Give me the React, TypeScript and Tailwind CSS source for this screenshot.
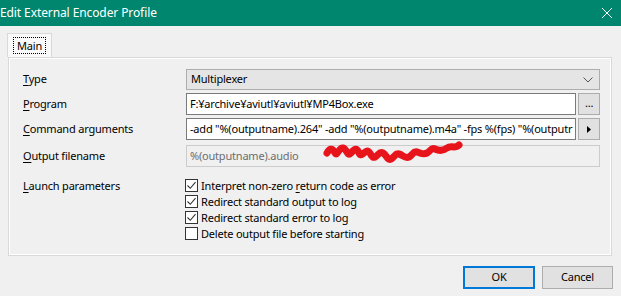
import React from "react";

const font = { fontFamily: '"Noto Sans", "Open Sans", sans-serif' };

function U({ children }: { children: React.ReactNode }) {
  return <span className="underline underline-offset-2 decoration-1">{children}</span>;
}

function Check({ checked, children }: { checked: boolean; children: React.ReactNode }) {
  return (
    <div className="flex items-center h-[16px]">
      <div className="w-[13px] h-[13px] border border-[#333] bg-white flex items-center justify-center">
        {checked && (
          <svg width="11" height="11" viewBox="0 0 11 11">
            <path d="M1.5 5.5 L4.3 8.3 L9.5 2.2" fill="none" stroke="#333" strokeWidth="1.1" />
          </svg>
        )}
      </div>
      <span className="ml-[3px] text-black leading-none">{children}</span>
    </div>
  );
}

export default function App() {
  return (
    <div className="w-[621px] h-[296px] bg-[#f0f0f0] flex flex-col overflow-hidden text-[11px] tracking-[-0.2px] text-black" style={font}>
      <div className="h-[26px] bg-[#00866f] flex items-center justify-between shrink-0">
        <span className="text-white text-[12px] tracking-[-0.1px]">Edit External Encoder Profile</span>
        <svg width="12" height="12" viewBox="0 0 12 12" className="mr-[8px]">
          <path d="M1 1 L11 11 M11 1 L1 11" stroke="#fff" strokeWidth="1" />
        </svg>
      </div>
      <div className="pl-[7px] pt-[7px] flex">
        <div className="h-[24px] w-[45px] border border-b-0 border-[#d9d9d9] bg-[#f9f9f9] flex items-center justify-center">
          <div className="border border-dotted border-black px-[3px] h-[17px] flex items-center leading-none">Main</div>
        </div>
      </div>
      <div className="ml-[8px] w-[604px] h-[199px] border border-[#d9d9d9] bg-[#f0f0f0] shadow-[inset_1px_1px_0_#fff,inset_-1px_-1px_0_#fff] pt-[11px] pl-[14px] pr-[11px] flex flex-col">
        <div className="flex items-center h-[21px]">
          <div className="w-[163px] shrink-0"><U>T</U>ype</div>
          <div className="flex-1 h-[21px] bg-[#e5e5e5] border border-[#adadad] flex items-center justify-between pl-[4px] pr-[6px]">
            <span>Multiplexer</span>
            <svg width="10" height="6" viewBox="0 0 10 6">
              <path d="M0.5 0.5 L5 5 L9.5 0.5" fill="none" stroke="#555" strokeWidth="1" />
            </svg>
          </div>
        </div>
        <div className="flex items-center h-[22px] mt-[3px]">
          <div className="w-[163px] shrink-0"><U>P</U>rogram</div>
          <div className="w-[391px] h-[22px] bg-white border border-[#7a7a7a] flex items-center pl-[3px] overflow-hidden whitespace-nowrap">F:¥archive¥aviutl¥aviutl¥MP4Box.exe</div>
          <div className="ml-[2px] w-[22px] h-[22px] bg-[#e1e1e1] border border-[#adadad] flex items-center justify-center leading-none pb-[3px]">...</div>
        </div>
        <div className="flex items-center h-[22px] mt-[3px]">
          <div className="w-[163px] shrink-0"><U>C</U>ommand arguments</div>
          <div className="w-[391px] h-[22px] bg-white border border-[#7a7a7a] flex items-center pl-[3px] overflow-hidden whitespace-nowrap">-add "%(outputname).264" -add "%(outputname).m4a" -fps %(fps) "%(outputr</div>
          <div className="ml-[2px] w-[22px] h-[22px] bg-[#e1e1e1] border border-[#adadad] flex items-center justify-center">
            <svg width="4" height="7" viewBox="0 0 4 7"><path d="M0 0 L4 3.5 L0 7 Z" fill="#000" /></svg>
          </div>
        </div>
        <div className="flex items-center h-[22px] mt-[5px] relative">
          <div className="w-[163px] shrink-0"><U>O</U>utput filename</div>
          <div className="w-[415px] h-[22px] bg-[#f0f0f0] border border-[#cccccc] flex items-center pl-[3px] text-[#6d6d6d]">%(outputname).audio</div>
          <svg className="absolute left-[298px] top-[-6px]" width="145" height="30" viewBox="0 0 145 30">
            <path d="M6 14 C9 8,12 10,14 14 C16 18,18 8,22 9 C26 10,26 18,30 14 C34 9,36 9,38 14 C40 19,44 12,46 12 C50 12,50 20,54 18 C58 16,58 12,62 14 C66 16,66 22,70 20 C74 18,74 14,78 15 C82 16,84 20,88 18 C92 16,92 12,96 13 C100 14,102 16,106 14 C110 12,110 8,114 10 C118 12,122 12,126 9 C130 6,134 10,138 6" fill="none" stroke="#e8141b" strokeWidth="7" strokeLinecap="round" strokeLinejoin="round" />
          </svg>
        </div>
        <div className="flex mt-[10px]">
          <div className="w-[162px] shrink-0 pt-[1px]"><U>L</U>aunch parameters</div>
          <div className="flex flex-col">
            <Check checked>Interpret non-zero <U>r</U>eturn code as error</Check>
            <Check checked>Redirect standard output to log</Check>
            <Check checked>Redirect standard error to log</Check>
            <Check checked={false}>Delete output file before starting</Check>
          </div>
        </div>
      </div>
      <div className="flex justify-end gap-[7px] pr-[8px] mt-[10px]">
        <div className="w-[72px] h-[23px] bg-[#e1e1e1] border-2 border-[#0078d7] flex items-center justify-center">OK</div>
        <div className="w-[71px] h-[23px] bg-[#e1e1e1] border border-[#adadad] flex items-center justify-center">Cancel</div>
      </div>
    </div>
  );
}
